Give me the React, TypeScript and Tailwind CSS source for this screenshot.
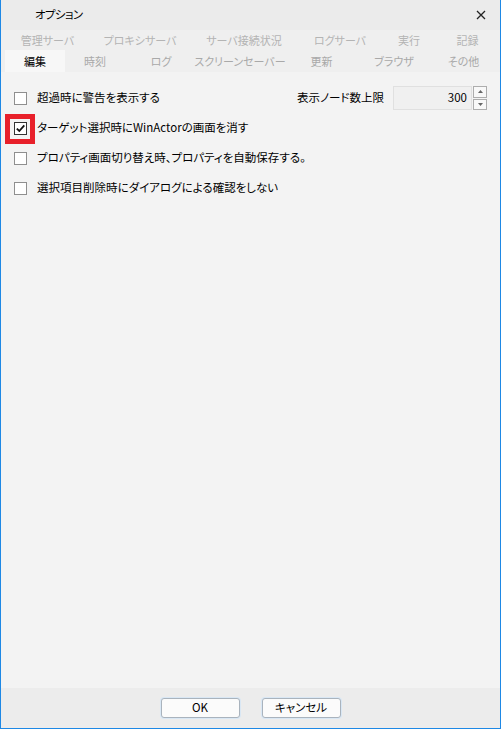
import React from "react";

const row1 = [
  { t: "管理サーバ", w: 85 },
  { t: "プロキシサーバ", w: 100 },
  { t: "サーバ接続状況", w: 108 },
  { t: "ログサーバ", w: 84 },
  { t: "実行", w: 54 },
  { t: "記録", w: 63 },
];
const row2 = [
  { t: "編集", w: 60, sel: true },
  { t: "時刻", w: 60 },
  { t: "ログ", w: 72 },
  { t: "スクリーンセーバー", w: 86 },
  { t: "更新", w: 77 },
  { t: "ブラウザ", w: 68 },
  { t: "その他", w: 71 },
];

function Box({ checked }: { checked?: boolean }) {
  return (
    <div
      className={
        "w-[13px] h-[13px] shrink-0 border bg-white flex items-center justify-center " +
        (checked ? "border-[#333333]" : "border-[#8f8f8f]")
      }
    >
      {checked && (
        <svg width="11" height="11" viewBox="0 0 11 11">
          <path d="M1.8 5.6 L4.3 8 L9.3 2.4" fill="none" stroke="#111" strokeWidth="1.8" />
        </svg>
      )}
    </div>
  );
}

export default function App() {
  return (
    <div className="w-[501px] h-[730px] bg-white font-['Noto_Sans_CJK_JP','Noto_Sans',sans-serif] [font-feature-settings:'palt'] text-[11.5px] text-black">
      <div className="flex flex-col h-[729px] border-x border-b border-[#1e88e5] bg-[#f3f3f3]">
        {/* title bar */}
        <div className="h-[30px] shrink-0 bg-[#ebebeb] flex items-center justify-between pl-[34px] pr-[10px]">
          <span className="text-[11.5px] tracking-[-0.6px] leading-none">オプション</span>
          <svg width="10" height="10" viewBox="0 0 10 10" className="mr-[4px]">
            <path d="M1 1 L9 9 M9 1 L1 9" stroke="#222" strokeWidth="1.3" />
          </svg>
        </div>
        {/* tabs row 1 */}
        <div className="h-[20px] shrink-0 bg-[#efefef] flex pl-[4px] text-[11px] text-[#b4b4b4]">
          {row1.map((r) => (
            <div key={r.t} style={{ width: r.w }} className="flex items-center justify-center leading-none whitespace-nowrap">
              {r.t}
            </div>
          ))}
        </div>
        {/* tabs row 2 */}
        <div className="h-[22px] shrink-0 bg-[#efefef] flex pl-[4px] text-[11px] text-[#a9a9a9]">
          {row2.map((r) => (
            <div
              key={r.t}
              style={{ width: r.w }}
              className={
                "flex items-center justify-center leading-none whitespace-nowrap " +
                (r.sel ? "bg-[#f7f7f7] text-black" : "")
              }
            >
              {r.t}
            </div>
          ))}
        </div>
        {/* content */}
        <div className="flex-1 relative pt-[11px] pl-[13px] pr-[13px]">
          <div className="h-[30px] flex items-center justify-between">
            <div className="flex items-center gap-[10px]">
              <Box />
              <span>超過時に警告を表示する</span>
            </div>
            <div className="flex items-center">
              <span className="mr-[9px]">表示ノード数上限</span>
              <div className="w-[79px] h-[24px] bg-[#f0f0f0] border border-[#e0e0e0] flex items-center justify-end pr-[4px]">
                300
              </div>
              <div className="ml-[1px] w-[14px] h-[24px] flex flex-col gap-[1px]">
                <div className="flex-1 border border-[#adadad] bg-[#f8f8f8] flex items-center justify-center">
                  <svg width="5" height="3" viewBox="0 0 5 3"><path d="M0 3 L2.5 0 L5 3Z" fill="#666" /></svg>
                </div>
                <div className="flex-1 border border-[#adadad] bg-[#f8f8f8] flex items-center justify-center">
                  <svg width="5" height="3" viewBox="0 0 5 3"><path d="M0 0 L2.5 3 L5 0Z" fill="#666" /></svg>
                </div>
              </div>
            </div>
          </div>
          <div className="h-[30px] flex items-center gap-[10px]">
            <Box checked />
            <span>ターゲット選択時にWinActorの画面を消す</span>
          </div>
          <div className="h-[30px] flex items-center gap-[10px]">
            <Box />
            <span>プロパティ画面切り替え時、プロパティを自動保存する。</span>
          </div>
          <div className="h-[30px] flex items-center gap-[10px]">
            <Box />
            <span>選択項目削除時にダイアログによる確認をしない</span>
          </div>
          <div className="absolute left-[4px] top-[42px] w-[30px] h-[30px] border-[5px] border-[#e8202a]" />
        </div>
        {/* footer */}
        <div className="h-[40px] shrink-0 bg-[#ececec] flex items-center justify-center gap-[22px]">
          <button className="w-[79px] h-[20px] rounded-[3px] border border-[#a9b3bd] bg-[#fbfbfb] shadow-[0_0_0_1px_#d9e7f4] text-[11.5px] leading-none">
            OK
          </button>
          <button className="w-[79px] h-[20px] rounded-[3px] border border-[#a9b3bd] bg-[#fbfbfb] shadow-[0_0_0_1px_#d9e7f4] text-[11.5px] leading-none">
            キャンセル
          </button>
        </div>
      </div>
    </div>
  );
}
